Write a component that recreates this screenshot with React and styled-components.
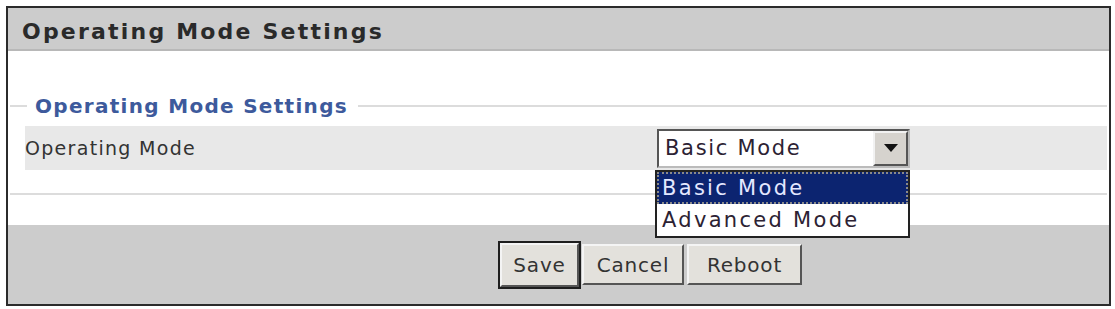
import React from 'react';
import styled, { createGlobalStyle } from 'styled-components';

const GlobalStyle = createGlobalStyle`
    html, body {
        margin: 0;
        padding: 0;
        background: #ffffff;
    }
`

const Frame = styled.div`
    position: relative;
    margin: 6px 4px 0 6px;
    height: 296px;
    border: 2px solid #2b2b2b;
    display: flex;
    flex-direction: column;
    font-family: "DejaVu Sans", Verdana, sans-serif;
    color: #222;
`

const Header = styled.div`
    height: 43px;
    box-sizing: border-box;
    background: #cccccc;
    border-bottom: 2px solid #b8b8b8;
    display: flex;
    align-items: center;
    padding: 5px 0 0 14px;
    font-size: 22px;
    letter-spacing: 2.2px;
    font-weight: bold;
    color: #2a2a2a;
`

const Body = styled.div`
    padding: 43px 2px 0 2px;
    height: 131px;
`

const Fieldset = styled.fieldset`
    margin: 0;
    padding: 8px 0 23px 15px;
    border: none;
    border-top: 2px solid #dcdcdc;
    border-bottom: 2px solid #dcdcdc;
    min-width: 0;

    legend {
        margin-left: 2px;
        padding: 0 10px 0 8px;
        font-size: 20px;
        letter-spacing: 1.3px;
        font-weight: bold;
        color: #3d5a9c;
    }
`

const Row = styled.div`
    position: relative;
    height: 44px;
    background: #e8e8e8;
    display: flex;
    align-items: center;
`

const Label = styled.div`
    width: 632px;
    font-size: 19px;
    letter-spacing: 1.3px;
    color: #333;
`

const Select = styled.div`
    width: 243px;
    height: 35px;
    background: #fff;
    border: 2px solid;
    border-color: #555 #bbb #bbb #555;
    display: flex;
    align-items: center;
    justify-content: space-between;
    padding-left: 6px;
    box-sizing: content-box;
    font-size: 21px;
    letter-spacing: 1.7px;
    color: #2c2233;
`

const ArrowButton = styled.div`
    width: 31px;
    height: 31px;
    background: #d6d3ce;
    border: 2px solid;
    border-color: #f2f2f2 #555 #555 #f2f2f2;
    display: flex;
    align-items: center;
    justify-content: center;
`

const Dropdown = styled.div`
    position: absolute;
    left: 630px;
    top: 44px;
    width: 251px;
    background: #fff;
    border: 2px solid #222;
    z-index: 2;
`

const Option = styled.div`
    height: 32px;
    line-height: 32px;
    padding-left: 5px;
    font-size: 21px;
    letter-spacing: 2.3px;
    color: ${p => (p.$active ? '#e4e8ff' : '#2c2233')};
    background: ${p => (p.$active ? '#0c2470' : '#fff')};
    outline: ${p => (p.$active ? '2px dotted #8a8a8a' : 'none')};
    outline-offset: -2px;
`

const Footer = styled.div`
    flex: 1;
    background: #cccccc;
    display: flex;
    align-items: center;
    gap: 3px;
    padding-left: 492px;
`

const Button = styled.button`
    width: ${p => p.$w}px;
    height: ${p => (p.$default ? '44px' : '41px')};
    padding: 0;
    font-family: "DejaVu Sans", Verdana, sans-serif;
    font-size: 20px;
    letter-spacing: 0.8px;
    color: #333;
    background: #e3e1dc;
    border: 2px solid;
    border-color: #f4f4f4 #555 #555 #f4f4f4;
    box-shadow: ${p => (p.$default ? '0 0 0 2px #1e1e1e' : 'none')};
`

const App = () => {
    return (
        <>
            <GlobalStyle />
            <Frame>
                <Header>Operating Mode Settings</Header>
                <Body>
                    <Fieldset>
                        <legend>Operating Mode Settings</legend>
                        <Row>
                            <Label>Operating Mode</Label>
                            <Select>
                                <span>Basic Mode</span>
                                <ArrowButton>
                                    <svg width="14" height="8" viewBox="0 0 14 8">
                                        <path d="M0 0 L14 0 L7 8 Z" fill="#111" />
                                    </svg>
                                </ArrowButton>
                            </Select>
                            <Dropdown>
                                <Option $active>Basic Mode</Option>
                                <Option>Advanced Mode</Option>
                            </Dropdown>
                        </Row>
                    </Fieldset>
                </Body>
                <Footer>
                    <Button $default $w={79}>Save</Button>
                    <Button $w={102}>Cancel</Button>
                    <Button $w={115}>Reboot</Button>
                </Footer>
            </Frame>
        </>
    )
}

export default App;
